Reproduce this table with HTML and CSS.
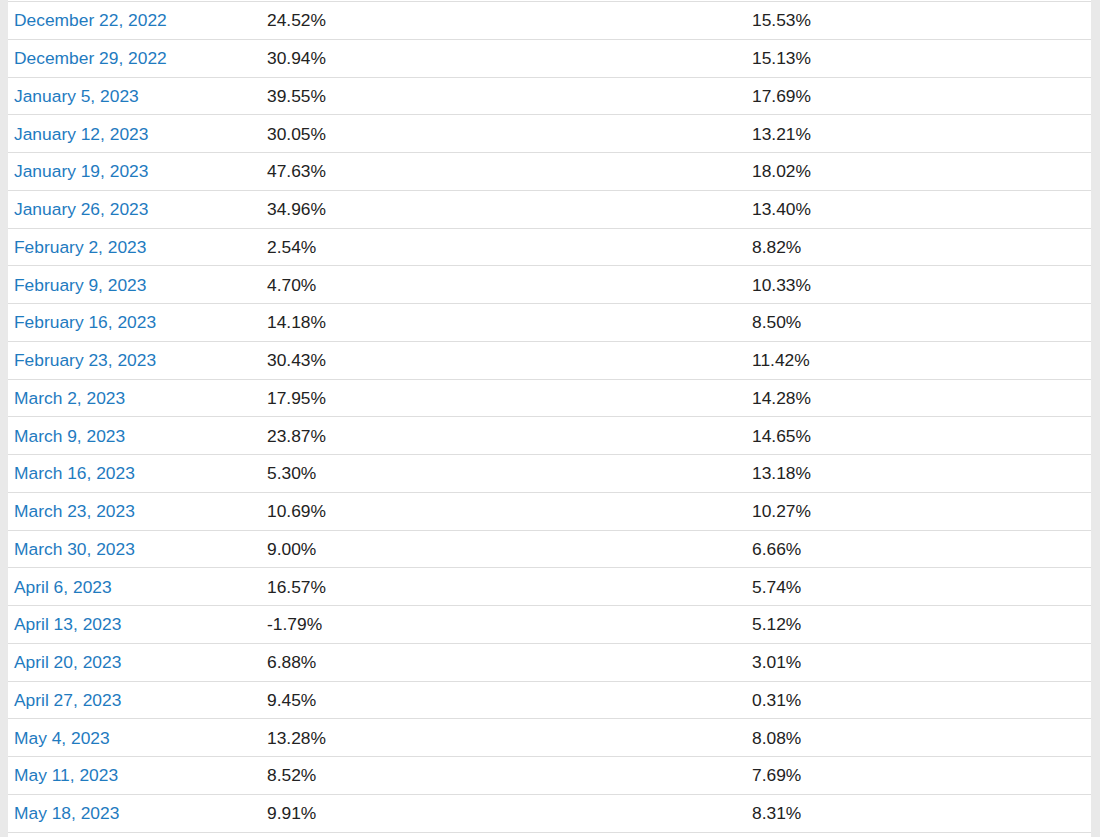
FILE: index.html
```html
<!DOCTYPE html>
<html>
<head>
<meta charset="utf-8">
<link rel="stylesheet" href="styles.css">
</head>
<body>
<div class="page">
<table class="returns">
<tbody>
<tr><td class="date"><a href="#">December 22, 2022</a></td><td>24.52%</td><td>15.53%</td></tr>
<tr><td class="date"><a href="#">December 29, 2022</a></td><td>30.94%</td><td>15.13%</td></tr>
<tr><td class="date"><a href="#">January 5, 2023</a></td><td>39.55%</td><td>17.69%</td></tr>
<tr><td class="date"><a href="#">January 12, 2023</a></td><td>30.05%</td><td>13.21%</td></tr>
<tr><td class="date"><a href="#">January 19, 2023</a></td><td>47.63%</td><td>18.02%</td></tr>
<tr><td class="date"><a href="#">January 26, 2023</a></td><td>34.96%</td><td>13.40%</td></tr>
<tr><td class="date"><a href="#">February 2, 2023</a></td><td>2.54%</td><td>8.82%</td></tr>
<tr><td class="date"><a href="#">February 9, 2023</a></td><td>4.70%</td><td>10.33%</td></tr>
<tr><td class="date"><a href="#">February 16, 2023</a></td><td>14.18%</td><td>8.50%</td></tr>
<tr><td class="date"><a href="#">February 23, 2023</a></td><td>30.43%</td><td>11.42%</td></tr>
<tr><td class="date"><a href="#">March 2, 2023</a></td><td>17.95%</td><td>14.28%</td></tr>
<tr><td class="date"><a href="#">March 9, 2023</a></td><td>23.87%</td><td>14.65%</td></tr>
<tr><td class="date"><a href="#">March 16, 2023</a></td><td>5.30%</td><td>13.18%</td></tr>
<tr><td class="date"><a href="#">March 23, 2023</a></td><td>10.69%</td><td>10.27%</td></tr>
<tr><td class="date"><a href="#">March 30, 2023</a></td><td>9.00%</td><td>6.66%</td></tr>
<tr><td class="date"><a href="#">April 6, 2023</a></td><td>16.57%</td><td>5.74%</td></tr>
<tr><td class="date"><a href="#">April 13, 2023</a></td><td>-1.79%</td><td>5.12%</td></tr>
<tr><td class="date"><a href="#">April 20, 2023</a></td><td>6.88%</td><td>3.01%</td></tr>
<tr><td class="date"><a href="#">April 27, 2023</a></td><td>9.45%</td><td>0.31%</td></tr>
<tr><td class="date"><a href="#">May 4, 2023</a></td><td>13.28%</td><td>8.08%</td></tr>
<tr><td class="date"><a href="#">May 11, 2023</a></td><td>8.52%</td><td>7.69%</td></tr>
<tr><td class="date"><a href="#">May 18, 2023</a></td><td>9.91%</td><td>8.31%</td></tr>
<tr class="last"><td class="date"></td><td></td><td></td></tr>
</tbody>
</table>
</div>
</body>
</html>
```
FILE: styles.css
```css
html, body {
  margin: 0;
  padding: 0;
  background: #e9e9e9;
  height: 100%;
  overflow: hidden;
}
.page {
  margin: 0 9px 0 8px;
  background: #fff;
  padding-top: 1px;
  height: 100%;
  box-sizing: border-box;
}
.returns {
  width: 100%;
  border-collapse: collapse;
  table-layout: fixed;
  font-family: "Liberation Sans", Arial, sans-serif;
  font-size: 17.4px;
  color: #222;
}
.returns td {
  height: 37.75px;
  box-sizing: border-box;
  border-top: 1px solid #dedede;
  padding: 0 6px;
  vertical-align: middle;
  line-height: 20px;
}
.returns td:nth-child(1) { width: 253px; }
.returns td:nth-child(2) { width: 485px; }
.returns td a {
  color: #1f7bbf;
  text-decoration: none;
}
```
